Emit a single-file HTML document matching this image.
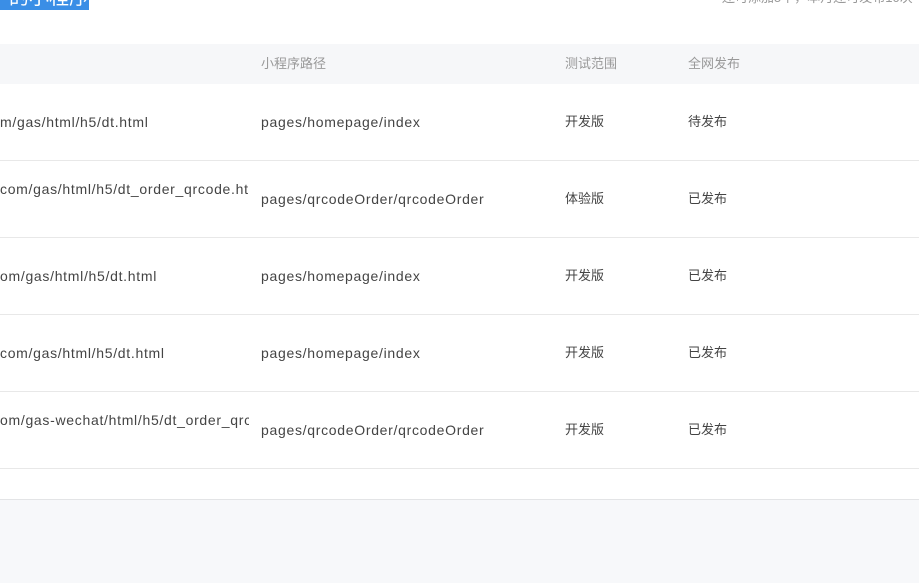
<!DOCTYPE html>
<html><head><meta charset="utf-8"><style>
body{margin:0;width:919px;height:583px;overflow:hidden;background:#f7f8fa;font-family:"Liberation Sans","Noto Sans CJK SC",sans-serif;position:relative}
.main{position:absolute;left:0;top:0;width:919px;height:499px;background:#fff;border-bottom:1px solid #e3e4e6}
.t{position:absolute;font-size:14px;color:#444;white-space:nowrap;line-height:18px;letter-spacing:0.7px}
.c{position:absolute;font-size:13px;color:#444;white-space:nowrap;line-height:18px}
.h{position:absolute;font-size:13px;color:#999;line-height:18px}
.row{position:absolute;left:0;width:919px;border-bottom:1px solid #e8e8e8}
</style></head><body>
<div class="main">
<div style="position:absolute;left:0;top:-14px;height:24px;width:89px;background:#3a8ee6;color:#fff;font-size:20px;line-height:24px;overflow:hidden;white-space:nowrap;text-align:right">的小程序</div>
<div style="position:absolute;left:722px;top:-11px;font-size:13px;color:#999;white-space:nowrap;line-height:18px">还可添加5个，本月还可发布10次</div>
<div style="position:absolute;left:0;top:44px;width:919px;height:40px;background:#f6f7f9"></div>
<div class="h" style="left:261px;top:55px">小程序路径</div>
<div class="h" style="left:565px;top:55px">测试范围</div>
<div class="h" style="left:688px;top:55px">全网发布</div>
<div class="row" style="top:84px;height:76px"></div>
<div class="row" style="top:161px;height:76px"></div>
<div class="row" style="top:238px;height:76px"></div>
<div class="row" style="top:315px;height:76px"></div>
<div class="row" style="top:392px;height:76px"></div>
<div class="t" style="left:0;top:113px">m/gas/html/h5/dt.html</div>
<div class="t" style="left:261px;top:113px">pages/homepage/index</div>
<div class="c" style="left:565px;top:113px">开发版</div>
<div class="c" style="left:688px;top:113px">待发布</div>
<div class="t" style="left:0;top:180px">com/gas/html/h5/dt_order_qrcode.ht</div>
<div class="t" style="left:261px;top:190px">pages/qrcodeOrder/qrcodeOrder</div>
<div class="c" style="left:565px;top:190px">体验版</div>
<div class="c" style="left:688px;top:190px">已发布</div>
<div class="t" style="left:0;top:267px">om/gas/html/h5/dt.html</div>
<div class="t" style="left:261px;top:267px">pages/homepage/index</div>
<div class="c" style="left:565px;top:267px">开发版</div>
<div class="c" style="left:688px;top:267px">已发布</div>
<div class="t" style="left:0;top:344px">com/gas/html/h5/dt.html</div>
<div class="t" style="left:261px;top:344px">pages/homepage/index</div>
<div class="c" style="left:565px;top:344px">开发版</div>
<div class="c" style="left:688px;top:344px">已发布</div>
<div class="t" style="left:0;top:411px;width:249px;overflow:hidden">om/gas-wechat/html/h5/dt_order_qrcode</div>
<div class="t" style="left:261px;top:421px">pages/qrcodeOrder/qrcodeOrder</div>
<div class="c" style="left:565px;top:421px">开发版</div>
<div class="c" style="left:688px;top:421px">已发布</div>
</div>
</body></html>
